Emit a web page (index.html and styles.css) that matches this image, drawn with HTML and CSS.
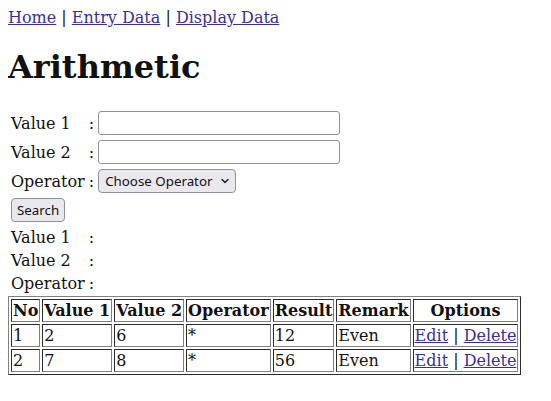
FILE: index.html
```html
<!DOCTYPE html>
<html>
<head>
<meta charset="utf-8">
<title>Arithmetic</title>
<link rel="stylesheet" href="styles.css">
</head>
<body class="page">
<a href="#" class="link">Home</a> | <a href="#" class="link">Entry Data</a> | <a href="#" class="link">Display Data</a>
<h1 class="title">Arithmetic</h1>
<form class="form">
<table class="form-table">
<tr><td>Value 1</td><td>:</td><td><input type="text" class="field"></td></tr>
<tr><td>Value 2</td><td>:</td><td><input type="text" class="field"></td></tr>
<tr><td>Operator</td><td>:</td><td><span class="select-wrap"><select class="choice"><option>Choose Operator</option><option>+</option><option>-</option><option>*</option><option>/</option></select><svg class="chev" width="8" height="6" viewBox="0 0 8 6"><path d="M1 1.5 L4 4.5 L7 1.5" fill="none" stroke="#222" stroke-width="1.5" stroke-linecap="round" stroke-linejoin="round"/></svg></span></td></tr>
<tr><td colspan="3"><button type="button" class="btn">Search</button></td></tr>
</table>
</form>
<table class="form-table">
<tr><td>Value 1</td><td>:</td><td></td></tr>
<tr><td>Value 2</td><td>:</td><td></td></tr>
<tr><td>Operator</td><td>:</td><td></td></tr>
</table>
<table class="data" border="1">
<tr><th>No</th><th>Value 1</th><th>Value 2</th><th>Operator</th><th>Result</th><th>Remark</th><th>Options</th></tr>
<tr><td>1</td><td>2</td><td>6</td><td>*</td><td>12</td><td>Even</td><td><a href="#" class="link">Edit</a> | <a href="#" class="link">Delete</a></td></tr>
<tr><td>2</td><td>7</td><td>8</td><td>*</td><td>56</td><td>Even</td><td><a href="#" class="link">Edit</a> | <a href="#" class="link">Delete</a></td></tr>
</table>
</body>
</html>
```
FILE: styles.css
```css
.page {
  font-family: "DejaVu Serif", serif;
  color: #111;
  background: #fff;
}
.link {
  color: #3b2f96;
}
.title {
  font-family: "DejaVu Serif", serif;
}
.form {
  margin: 0;
}
.field {
  box-sizing: border-box;
  width: 242px;
  height: 24px;
  margin: 0 0 1px 0;
  border: 1px solid #8f8f9d;
  border-radius: 3px;
  background: #fff;
  padding: 2px 4px;
  font: 13.33px "Noto Sans", sans-serif;
}
.select-wrap {
  position: relative;
  display: inline-block;
  margin: 0 0 1px 0;
}
.choice {
  -webkit-appearance: none;
  appearance: none;
  box-sizing: border-box;
  width: 138px;
  height: 24px;
  margin: 0;
  padding: 0 0 0 6px;
  border: 1px solid #8f8f9d;
  border-radius: 4px;
  background: #e9e9ed;
  color: #111;
  font: 13.33px "Noto Sans", sans-serif;
  vertical-align: top;
}
.chev {
  position: absolute;
  right: 7px;
  top: 9px;
  pointer-events: none;
}
.btn {
  box-sizing: border-box;
  height: 24px;
  margin: 0;
  padding: 0 5px;
  border: 1px solid #8f8f9d;
  border-radius: 4px;
  background: #e9e9ed;
  color: #111;
  font: 13.33px "Noto Sans", sans-serif;
}
```
